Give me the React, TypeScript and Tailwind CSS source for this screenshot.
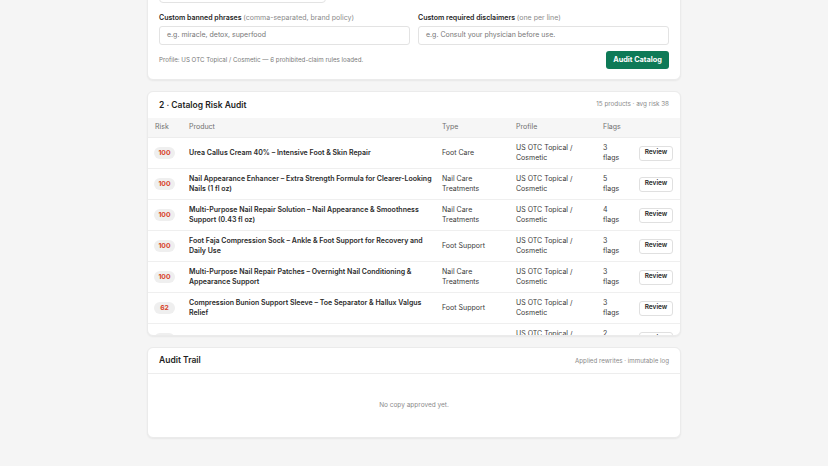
import React from 'react';

type Row = {
  risk: number;
  product: string;
  type: string;
  profile: string;
  flags: number;
};

const rows: Row[] = [
  { risk: 100, product: 'Urea Callus Cream 40% – Intensive Foot & Skin Repair', type: 'Foot Care', profile: 'US OTC Topical / Cosmetic', flags: 3 },
  { risk: 100, product: 'Nail Appearance Enhancer – Extra Strength Formula for Clearer-Looking Nails (1 fl oz)', type: 'Nail Care Treatments', profile: 'US OTC Topical / Cosmetic', flags: 5 },
  { risk: 100, product: 'Multi-Purpose Nail Repair Solution – Nail Appearance & Smoothness Support (0.43 fl oz)', type: 'Nail Care Treatments', profile: 'US OTC Topical / Cosmetic', flags: 4 },
  { risk: 100, product: 'Foot Faja Compression Sock – Ankle & Foot Support for Recovery and Daily Use', type: 'Foot Support', profile: 'US OTC Topical / Cosmetic', flags: 3 },
  { risk: 100, product: 'Multi-Purpose Nail Repair Patches – Overnight Nail Conditioning & Appearance Support', type: 'Nail Care Treatments', profile: 'US OTC Topical / Cosmetic', flags: 3 },
  { risk: 62, product: 'Compression Bunion Support Sleeve – Toe Separator & Hallux Valgus Relief', type: 'Foot Support', profile: 'US OTC Topical / Cosmetic', flags: 3 },
  { risk: 48, product: 'Gel Toe Cap Protectors – Cushioning for Corns and Blisters', type: 'Foot Care', profile: 'US OTC Topical / Cosmetic', flags: 2 },
  { risk: 30, product: 'Heel Balm with Shea Butter – Softening Care for Dry Heels', type: 'Foot Care', profile: 'US OTC Topical / Cosmetic', flags: 1 },
];

function Card({ children, className = '' }: { children: React.ReactNode; className?: string }) {
  return (
    <div className={`bg-white rounded-[6px] border border-[#ebebeb] shadow-[0_1px_2px_rgba(0,0,0,0.06)] ${className}`}>
      {children}
    </div>
  );
}

export default function App() {
  return (
    <div
      className="bg-[#f5f5f5] text-[#1f1f1f] overflow-hidden h-[466px]"
      style={{ fontFamily: "Inter, 'Noto Sans', sans-serif" }}
    >
      <div className="w-[534px] mx-auto flex flex-col gap-[11px] mt-[-32px]">
        {/* 1 - 配置（页面已向下滚动） */}
        <Card className="px-[11px] pt-[15px] pb-[10px]">
          <div className="w-[167px] h-[19px] rounded-[4px] border border-[#e3e3e3] bg-white" />
          <div className="grid grid-cols-2 gap-[8px] mt-[10px]">
            <div className="flex flex-col gap-[4px]">
              <div className="text-[7px] font-semibold leading-[9px]">
                Custom banned phrases <span className="font-normal text-[#8a8a8a]">(comma-separated, brand policy)</span>
              </div>
              <div className="h-[19px] rounded-[3px] border border-[#e3e3e3] px-[7px] flex items-center text-[7px] text-[#777]">
                e.g. miracle, detox, superfood
              </div>
            </div>
            <div className="flex flex-col gap-[4px]">
              <div className="text-[7px] font-semibold leading-[9px]">
                Custom required disclaimers <span className="font-normal text-[#8a8a8a]">(one per line)</span>
              </div>
              <div className="h-[19px] rounded-[3px] border border-[#e3e3e3] px-[7px] flex items-center text-[7px] text-[#777]">
                e.g. Consult your physician before use.
              </div>
            </div>
          </div>
          <div className="flex items-center justify-between mt-[6px]">
            <div className="text-[6.2px] text-[#7a7a7a]">
              Profile: US OTC Topical / Cosmetic — 6 prohibited-claim rules loaded.
            </div>
            <button className="h-[18px] w-[63px] rounded-[3px] bg-[#0e7a57] text-white text-[7.3px] font-bold">
              Audit Catalog
            </button>
          </div>
        </Card>

        {/* 2 - 风险审核表 */}
        <Card className="overflow-hidden">
          <div className="h-[26px] px-[11px] flex items-center justify-between">
            <div className="text-[8.5px] font-semibold">2 · Catalog Risk Audit</div>
            <div className="text-[6.3px] text-[#8a8a8a]">15 products · avg risk 38</div>
          </div>
          <div className="h-[217px] overflow-hidden">
            <div className="h-[20px] bg-[#f6f6f6] flex items-center text-[7px] text-[#6f6f6f] border-b border-[#ededed]">
              <div className="w-[41px] pl-[7px]">Risk</div>
              <div className="w-[253px]">Product</div>
              <div className="w-[74px]">Type</div>
              <div className="w-[87px]">Profile</div>
              <div className="w-[36px]">Flags</div>
            </div>
            {rows.map((r, i) => (
              <div key={i} className="h-[31px] flex items-center border-b border-[#efefef] text-[7px]">
                <div className="w-[41px] pl-[6px]">
                  <span className="inline-flex items-center justify-center h-[12px] w-[21px] rounded-full bg-[#efefef] text-[#d8432a] font-bold text-[6.8px]">
                    {r.risk}
                  </span>
                </div>
                <div className="w-[253px] pr-[8px] font-semibold leading-[10px] text-[#2a2a2a]">{r.product}</div>
                <div className="w-[74px] pr-[12px] leading-[10px] text-[#3a3a3a]">{r.type}</div>
                <div className="w-[87px] pr-[14px] leading-[10px] text-[#3a3a3a]">{r.profile}</div>
                <div className="w-[36px] pr-[14px] leading-[10px] text-[#3a3a3a]">
                  {r.flags} flags
                </div>
                <button className="h-[15px] w-[34px] rounded-[3px] border border-[#e0e0e0] bg-white text-[6.5px] font-semibold">
                  Review
                </button>
              </div>
            ))}
          </div>
        </Card>

        {/* 3 - 审核记录 */}
        <Card>
          <div className="h-[26px] px-[11px] flex items-center justify-between border-b border-[#ededed]">
            <div className="text-[8.5px] font-semibold">Audit Trail</div>
            <div className="text-[6.2px] text-[#8a8a8a]">Applied rewrites · immutable log</div>
          </div>
          <div className="h-[63px] flex items-center justify-center text-[6.5px] text-[#8a8a8a]">
            No copy approved yet.
          </div>
        </Card>
      </div>
    </div>
  );
}
